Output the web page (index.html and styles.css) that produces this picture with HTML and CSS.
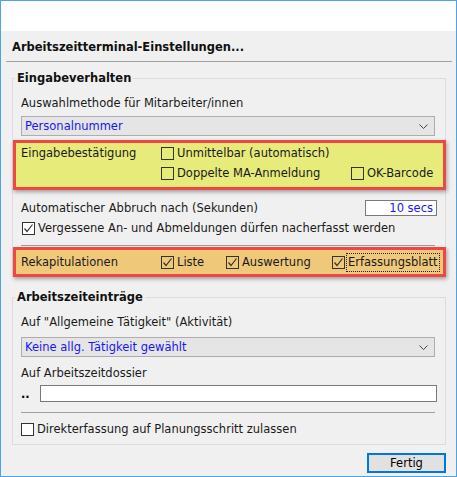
FILE: index.html
```html
<!DOCTYPE html>
<html lang="de">
<head>
<meta charset="utf-8">
<title>Arbeitszeitterminal-Einstellungen</title>
<link rel="stylesheet" href="styles.css">
</head>
<body>
<div class="window">
  <div class="titlebar"></div>
  <div class="title">Arbeitszeitterminal-Einstellungen...</div>
  <div class="rule"></div>

  <fieldset class="group g1">
    <legend>Eingabeverhalten</legend>
    <div class="label l1">Auswahlmethode für Mitarbeiter/innen</div>
    <div class="select s1">
      <span>Personalnummer</span>
      <svg class="chev" width="9" height="5" viewBox="0 0 9 5"><polyline points="0.5,0.5 4.5,4.5 8.5,0.5" fill="none" stroke="#444" stroke-width="1"/></svg>
    </div>

    <div class="hl hl-yellow">
      <span class="hl-label">Eingabebestätigung</span>
      <span class="cb"><span class="box"></span>Unmittelbar (automatisch)</span>
      <span></span>
      <span></span>
      <span class="cb"><span class="box"></span>Doppelte MA-Anmeldung</span>
      <span class="cb"><span class="box"></span>OK-Barcode</span>
    </div>

    <div class="row timeout">
      <span>Automatischer Abbruch nach (Sekunden)</span>
      <div class="numbox">10 secs</div>
    </div>
    <div class="row cbrow">
      <span class="cb"><span class="box"><svg width="11" height="11" viewBox="0 0 11 11"><polyline points="1.5,5.5 4,8.5 9.5,1.5" fill="none" stroke="#333" stroke-width="1.2"/></svg></span>Vergessene An- und Abmeldungen dürfen nacherfasst werden</span>
    </div>
    <div class="sep s-a"></div>

    <div class="hl hl-orange">
      <span class="hl-label">Rekapitulationen</span>
      <span class="cb"><span class="box"><svg width="11" height="11" viewBox="0 0 11 11"><polyline points="1.5,5.5 4,8.5 9.5,1.5" fill="none" stroke="#333" stroke-width="1.2"/></svg></span>Liste</span>
      <span class="cb"><span class="box"><svg width="11" height="11" viewBox="0 0 11 11"><polyline points="1.5,5.5 4,8.5 9.5,1.5" fill="none" stroke="#333" stroke-width="1.2"/></svg></span>Auswertung</span>
      <span class="cb"><span class="box"><svg width="11" height="11" viewBox="0 0 11 11"><polyline points="1.5,5.5 4,8.5 9.5,1.5" fill="none" stroke="#333" stroke-width="1.2"/></svg></span><span class="focus">Erfassungsblatt</span></span>
    </div>
  </fieldset>

  <fieldset class="group g2">
    <legend>Arbeitszeiteinträge</legend>
    <div class="label l2">Auf "Allgemeine Tätigkeit" (Aktivität)</div>
    <div class="select s2">
      <span>Keine allg. Tätigkeit gewählt</span>
      <svg class="chev" width="9" height="5" viewBox="0 0 9 5"><polyline points="0.5,0.5 4.5,4.5 8.5,0.5" fill="none" stroke="#444" stroke-width="1"/></svg>
    </div>
    <div class="label l3">Auf Arbeitszeitdossier</div>
    <div class="row dossier">
      <span class="dots">..</span>
      <div class="textbox"></div>
    </div>
    <div class="sep s-b"></div>
    <div class="row cbrow cbrow2">
      <span class="cb"><span class="box"></span>Direkterfassung auf Planungsschritt zulassen</span>
    </div>
  </fieldset>

  <div class="footer">
    <button class="btn">Fertig</button>
  </div>
</div>
</body>
</html>
```

FILE: styles.css
```css
* { box-sizing: border-box; }

body {
  margin: 0;
  font-family: "DejaVu Sans", "Liberation Sans", sans-serif;
  font-size: 11.5px;
  color: #000;
}

.window {
  width: 457px;
  height: 477px;
  border: 1px solid #4aa5e6;
  background: #f0f0f0;
  display: flex;
  flex-direction: column;
  overflow: hidden;
}

.titlebar {
  flex: none;
  height: 30px;
  background: #fff;
}

.title {
  flex: none;
  height: 30px;
  padding: 9px 0 0 11px;
  font-weight: bold;
  line-height: 15px;
  color: #111;
}

.rule {
  flex: none;
  height: 1px;
  margin: 0 4px 0 5px;
  background: #a0a0a0;
}

.group {
  flex: none;
  min-width: 0;
  margin: 8px 10px 0 11px;
  padding: 0 10px 0 8px;
  border: 1px solid #dcdcdc;
}

.group legend {
  margin-left: -6px;
  padding: 0 2px;
  font-weight: bold;
  line-height: 16px;
  color: #111;
}

.g2 {
  margin-top: 13px;
  padding-bottom: 5px;
}

.label {
  line-height: 14px;
  color: #1a1a1a;
}

.l1 { margin-top: 10px; }
.l2 { margin-top: 10px; }
.l3 { margin-top: 9px; }

.select {
  height: 20px;
  border: 1px solid #adadad;
  background: #e5e5e5;
  display: flex;
  align-items: center;
  justify-content: space-between;
  padding: 0 6px 0 3px;
  color: #1818f0;
}

.s1 { margin-top: 6px; }
.s2 { margin-top: 8px; }

.chev { display: block; }

.hl {
  margin-left: -8px;
  margin-right: -11px;
  border: 3px solid #f04646;
  box-shadow: 1px 2px 4px rgba(0, 0, 0, 0.35);
  display: grid;
  align-items: center;
  padding: 0 5px;
  color: #1a1a1a;
}

.hl-yellow {
  margin-top: 4px;
  padding-bottom: 4px;
  background: #e6eb7a;
  grid-template-columns: 140px 190px auto;
  grid-auto-rows: 20px;
}

.hl-orange {
  margin-top: 1px;
  margin-bottom: -2px;
  height: 30px;
  background: #efc87a;
  grid-template-columns: 140px 65px 106px auto;
}

.cb {
  display: flex;
  align-items: center;
  white-space: nowrap;
  line-height: 14px;
}

.box {
  flex: none;
  width: 13px;
  height: 13px;
  border: 1px solid #333;
  margin-right: 3px;
  display: flex;
  align-items: center;
  justify-content: center;
}

.cbrow .box {
  background: #fff;
}

.focus {
  outline: 1px dotted #222;
  padding: 1px 1px;
  margin-left: -1px;
  line-height: 15px;
}

.row {
  display: flex;
  align-items: center;
  height: 20px;
}

.timeout {
  margin-top: 8px;
  justify-content: space-between;
  color: #1a1a1a;
}

.numbox {
  width: 72px;
  height: 16px;
  margin-right: -2px;
  border: 1px solid #7a7a7a;
  background: #fff;
  color: #1818f0;
  text-align: right;
  padding-right: 3px;
  line-height: 14px;
}

.cbrow {
  color: #1a1a1a;
}

.cbrow .cb {
  margin-left: 1px;
}

.sep {
  height: 1px;
  background: #a0a0a0;
}

.s-a { margin-top: 7px; }
.s-b { margin-top: 10px; }

.dossier {
  margin-top: 5px;
  height: 17px;
}

.dots {
  width: 19px;
  line-height: 14px;
  font-weight: bold;
}

.textbox {
  flex: 1;
  height: 17px;
  margin-right: -2px;
  border: 1px solid #7a7a7a;
  background: #fff;
}

.cbrow2 {
  margin-top: 6px;
}

.cbrow2 .cb {
  margin-left: 0;
}

.footer {
  flex: none;
  display: flex;
  justify-content: flex-end;
  padding: 8px 10px 0 0;
}

.btn {
  width: 79px;
  height: 20px;
  border: 2px solid #0078d7;
  background: #e1e1e1;
  font-family: "DejaVu Sans", "Liberation Sans", sans-serif;
  font-size: 11.5px;
  color: #000;
  padding: 0;
  line-height: 16px;
}
```
